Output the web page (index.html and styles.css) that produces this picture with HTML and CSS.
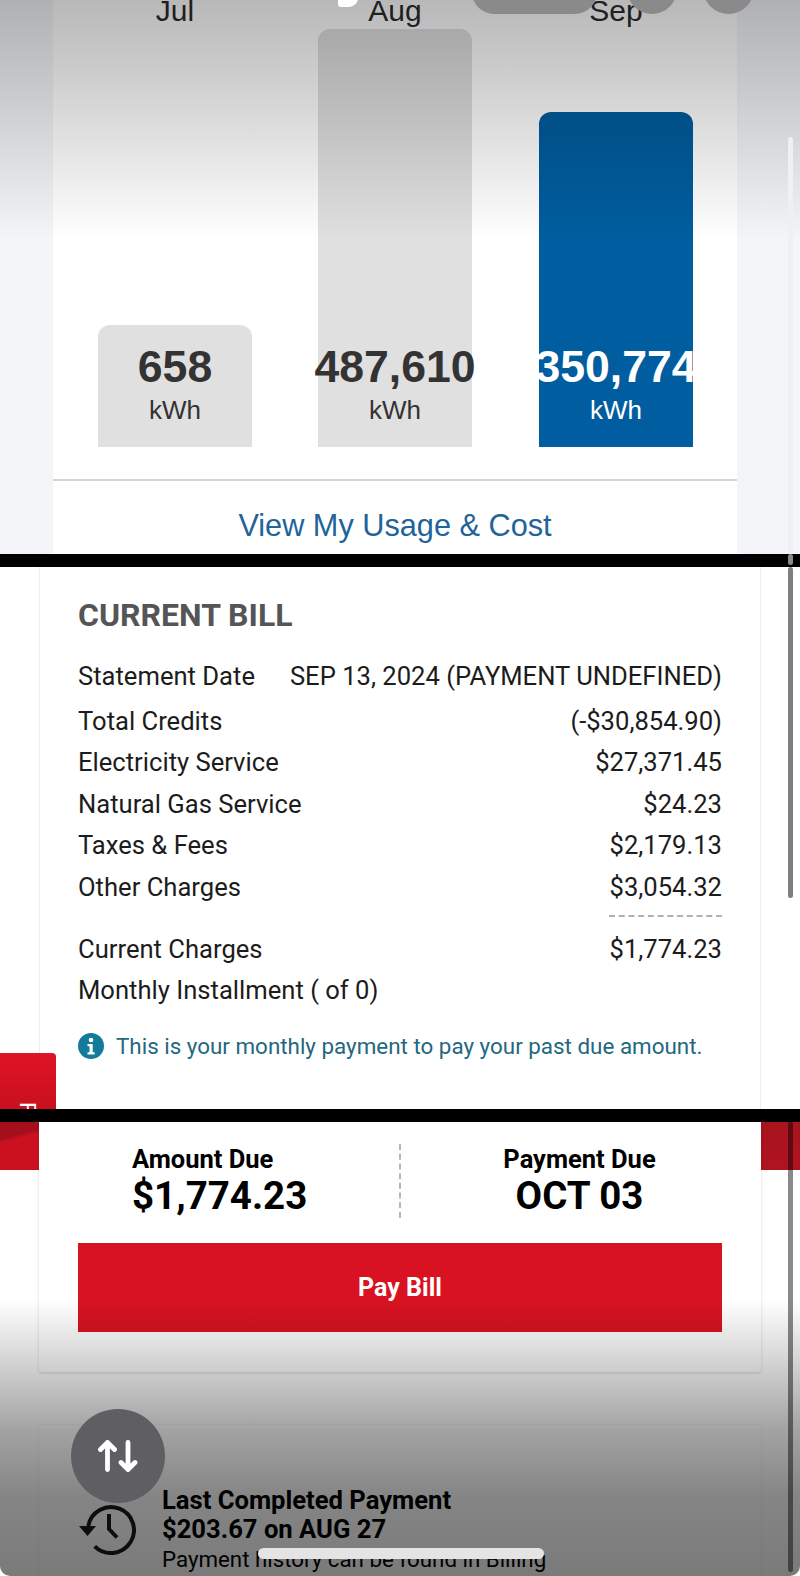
FILE: index.html
```html
<!DOCTYPE html>
<html lang="en">
<head>
<meta charset="utf-8">
<title>Current Bill</title>
<link rel="stylesheet" href="styles.css">
</head>
<body>
<main class="screen">
  <section class="usage">
    <div class="usage-card">
      <div class="chart">
        <div class="col"><div class="month">Jul</div><div class="slot"><div class="bar bar-jul"><b>658</b><span>kWh</span></div></div></div>
        <div class="col"><div class="month">Aug</div><div class="slot"><div class="bar bar-aug"><b>487,610</b><span>kWh</span></div></div></div>
        <div class="col col-sep"><div class="month">Sep</div><div class="slot"><div class="bar bar-sep"><b>350,774</b><span>kWh</span></div></div></div>
      </div>
      <div class="usage-link">View My Usage &amp; Cost</div>
    </div>
  </section>
  <div class="cut"></div>
  <section class="bill">
    <div class="bill-card">
      <h2>CURRENT BILL</h2>
      <div class="row row-first"><span>Statement Date</span><span>SEP 13, 2024 (PAYMENT UNDEFINED)</span></div>
      <div class="row"><span>Total Credits</span><span>(-$30,854.90)</span></div>
      <div class="row"><span>Electricity Service</span><span>$27,371.45</span></div>
      <div class="row"><span>Natural Gas Service</span><span>$24.23</span></div>
      <div class="row"><span>Taxes &amp; Fees</span><span>$2,179.13</span></div>
      <div class="row"><span>Other Charges</span><span>$3,054.32</span></div>
      <div class="sum-rule"></div>
      <div class="row"><span>Current Charges</span><span>$1,774.23</span></div>
      <div class="row"><span>Monthly Installment ( of 0)</span></div>
      <div class="note">
        <svg class="info" viewBox="0 0 26 26"><circle cx="13" cy="13" r="13" fill="#137a9a"/><circle cx="13" cy="7" r="2.3" fill="#fff"/><path d="M9.5 11h5.2v8.2h2v2.3H9.5v-2.3h2v-5.9h-2z" fill="#fff"/></svg>
        <span>This is your monthly payment to pay your past due amount.</span>
      </div>
    </div>
    <div class="red-tab"><span>F</span></div>
  </section>
  <div class="cut"></div>
  <section class="pay">
    <div class="red-band"><div class="band-left"></div><div class="band-right"></div></div>
    <div class="pay-card">
      <div class="due">
        <div class="due-amount"><div class="due-label">Amount Due</div><div class="due-value">$1,774.23</div></div>
        <div class="due-date"><div class="due-label">Payment Due</div><div class="due-value">OCT 03</div></div>
      </div>
      <div class="pay-button">Pay Bill</div>
    </div>
    <div class="last-card">
      <svg class="history" viewBox="0 0 57 52" fill="none" stroke="#1a1a1a" stroke-width="4">
        <path d="M9.3 22A23 23 0 1 1 15.7 42.3"/>
        <path d="M0 22h17l-8.5 10z" fill="#1a1a1a" stroke="none"/>
        <path d="M30 10v15l8 8.5"/>
      </svg>
      <div class="last-text">
        <div class="last-title">Last Completed Payment</div>
        <div class="last-title">$203.67 on AUG 27</div>
        <div class="last-sub">Payment history can be found in Billing</div>
      </div>
    </div>
  </section>
  <div class="shade-top"></div>
  <div class="shade-bottom"></div>
  <div class="clock-bit"></div>
  <div class="island"><i class="pill"></i><i class="blob"></i><i class="dot"></i></div>
  <div class="thumb thumb-a"></div>
  <div class="thumb thumb-tick"></div>
  <div class="thumb thumb-b"></div>
  <div class="thumb thumb-c"></div>
  <div class="fab">
    <svg viewBox="0 0 40 32" fill="none" stroke="#fff" stroke-width="4.8" stroke-linecap="round" stroke-linejoin="round">
      <path d="M9.5 29.5V2.5M2.5 9.5l7-7 7 7"/>
      <path d="M30 2.5v27M23 22.5l7 7 7-7"/>
    </svg>
  </div>
  <div class="home"></div>
</main>
</body>
</html>
```
FILE: styles.css
```css
* { box-sizing: border-box; }
html, body { margin: 0; padding: 0; }
body { width: 800px; height: 1576px; overflow: hidden; background: #fff; font-family: Roboto, "Liberation Sans", sans-serif; }
.screen { position: relative; width: 800px; height: 1576px; overflow: hidden; display: flex; flex-direction: column; border-radius: 0 0 10px 10px; }

.usage { height: 554px; background: #f3f5f9; padding: 0 63px 0 53px; overflow: hidden; flex: none; }
.usage-card { height: 554px; width: 684px; background: #fff; font-family: "Liberation Sans", Arial, sans-serif; }
.chart { display: flex; gap: 66px; padding-left: 45px; height: 479px; }
.col { width: 154px; display: flex; flex-direction: column; }
.col-sep { margin-left: 1px; }
.month { height: 29px; line-height: 23px; margin-top: -1px; text-align: center; font-size: 30px; color: #2b2b2b; }
.slot { height: 419px; display: flex; align-items: flex-end; }
.bar { width: 154px; display: flex; flex-direction: column; align-items: center; justify-content: flex-end; padding-bottom: 19px; background: #e0e0e0; border-radius: 12px 12px 0 0; color: #333; white-space: nowrap; }
.bar b { font-size: 44.6px; line-height: 50px; }
.bar span { font-size: 26px; line-height: 36px; }
.bar-jul { height: 122px; }
.bar-aug { height: 418px; }
.bar-sep { height: 335px; background: #005d9f; color: #fff; }
.usage-link { border-top: 2px solid #d4d4d4; height: 75px; text-align: center; line-height: 90px; font-size: 30.7px; color: #21649a; }

.cut { height: 13px; background: #000; flex: none; }

.bill { position: relative; height: 542px; background: #fff; padding: 0 39px; flex: none; overflow: hidden; }
.bill-card { height: 542px; width: 722px; border-left: 1px solid #eee; border-right: 1px solid #eee; padding: 27px 38px 0 38px; color: #1c1c1c; }
.bill-card h2 { margin: 0 0 20px; font-size: 32px; line-height: 42px; font-weight: 700; color: #555; }
.row { display: flex; justify-content: space-between; font-size: 25.6px; line-height: 41.6px; white-space: nowrap; }
.row-first { margin-bottom: 3px; }
.sum-rule { width: 113px; margin: 6px 0 12px auto; border-top: 2px dashed #b0b0b0; height: 2px; }
.note { display: flex; align-items: center; gap: 12px; margin-top: 21px; font-size: 22.4px; color: #24677f; white-space: nowrap; }
.info { width: 26px; height: 26px; flex: none; }
.red-tab { position: absolute; left: 0; bottom: 0; width: 56px; height: 56px; background: linear-gradient(#df1426, #c9101f); border-radius: 0 4px 0 0; color: #fff; overflow: hidden; }
.red-tab span { position: absolute; left: 21px; bottom: -11px; font-size: 22px; line-height: 24px; transform: rotate(90deg); }

.pay { position: relative; flex: 1; background: #fff; padding: 0 39px; }
.red-band { position: absolute; left: 0; right: 0; top: 0; height: 48px; display: flex; justify-content: space-between; }
.band-left { width: 39px; background: linear-gradient(165deg, #a50f1c 0 30%, #cb1120 36%); }
.band-right { width: 39px; background: linear-gradient(#a8141f, #b0131f); }
.pay-card { position: relative; height: 250px; width: 722px; background: #fff; padding: 0 39px; box-shadow: 0 1px 3px rgba(0,0,0,.16); }
.due { display: grid; grid-template-columns: 323px 1fr; height: 121px; padding-top: 22px; color: #000; }
.due-amount { padding-left: 54px; border-right: 2px dashed #b5b5b5; height: 74px; }
.due-date { text-align: center; padding-left: 36px; }
.due-label { font-size: 25.5px; line-height: 31px; font-weight: 700; white-space: nowrap; }
.due-value { font-size: 38.5px; line-height: 42px; font-weight: 700; white-space: nowrap; }
.pay-button { height: 89px; background: #d81221; color: #fff; font-size: 25px; font-weight: 700; line-height: 89px; text-align: center; }
.last-card { margin-top: 53px; height: 160px; width: 722px; box-shadow: 0 0 2px rgba(0,0,0,.1); display: flex; align-items: flex-start; padding: 61px 0 0 40px; gap: 26px; color: #000; }
.history { width: 57px; height: 52px; margin-top: 18px; flex: none; }
.last-text { white-space: nowrap; }
.last-title { font-size: 25.6px; line-height: 29px; font-weight: 700; }
.last-sub { font-size: 22.3px; line-height: 31px; }

.shade-top { position: absolute; left: 0; top: 0; right: 0; height: 240px; background: linear-gradient(rgba(0,0,0,.28), rgba(0,0,0,.2) 30%, rgba(0,0,0,0)); }
.shade-bottom { position: absolute; left: 0; right: 0; bottom: 0; height: 276px; background: linear-gradient(rgba(0,0,0,0), rgba(0,0,0,.2) 26%, rgba(0,0,0,.36) 47%, rgba(0,0,0,.48) 71%, rgba(0,0,0,.52)); }
.clock-bit { position: absolute; left: 338px; top: -8px; width: 20px; height: 15px; border-radius: 0 8px 12px 4px; background: #fff; }
.island { position: absolute; top: 0; left: 472px; }
.pill { position: absolute; left: 0; top: -30px; width: 125px; height: 44px; border-radius: 0 0 22px 22px; background: #8a8a8a; display: block; }
.blob { position: absolute; left: 155px; top: -30px; width: 50px; height: 44px; border-radius: 0 0 25px 25px; background: #8a8a8a; display: block; }
.dot { position: absolute; left: 231px; top: -30px; width: 51px; height: 44px; border-radius: 0 0 26px 26px; background: #8a8a8a; display: block; }
.thumb { position: absolute; left: 788px; width: 5px; border-radius: 3px; }
.thumb-a { top: 137px; height: 417px; background: #eef0f4; }
.thumb-tick { top: 554px; height: 11px; background: #8a8a8a; }
.thumb-b { top: 567px; height: 331px; background: rgba(0,0,0,.5); }
.thumb-c { top: 1122px; height: 450px; background: rgba(0,0,0,.46); }
.fab { position: absolute; left: 71px; top: 1409px; width: 94px; height: 94px; border-radius: 50%; background: #5f5f63; display: flex; align-items: center; justify-content: center; }
.fab svg { width: 40px; height: 32px; }
.home { position: absolute; left: 258px; top: 1548px; width: 286px; height: 11px; border-radius: 6px; background: #e4e4e4; }
```
